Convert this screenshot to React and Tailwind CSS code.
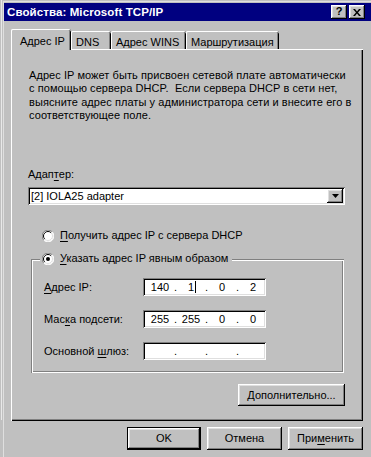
import React from "react";

const raised =
  "shadow-[inset_-1px_-1px_#000,inset_1px_1px_#fff,inset_-2px_-2px_#808080,inset_2px_2px_#dfdfdf]";
const sunken =
  "shadow-[inset_1px_1px_#808080,inset_-1px_-1px_#fff,inset_2px_2px_#000,inset_-2px_-2px_#dfdfdf]";

function Radio({ checked }) {
  return (
    <svg width="12" height="12" viewBox="0 0 12 12" className="shrink-0">
      <circle cx="6" cy="6" r="5.5" fill="#fff" />
      <path d="M10.2 1.8 A5.5 5.5 0 0 0 1.8 10.2" stroke="#808080" strokeWidth="1" fill="none" />
      <path d="M9.2 2.8 A4.2 4.2 0 0 0 2.8 9.2" stroke="#000" strokeWidth="1" fill="none" />
      <path d="M1.8 10.2 A5.5 5.5 0 0 0 10.2 1.8" stroke="#fff" strokeWidth="1" fill="none" />
      <path d="M2.8 9.2 A4.2 4.2 0 0 0 9.2 2.8" stroke="#dfdfdf" strokeWidth="1" fill="none" />
      {checked && <circle cx="6" cy="6" r="2" fill="#000" />}
    </svg>
  );
}

function U({ children }) {
  return <span className="underline underline-offset-[2px] decoration-1">{children}</span>;
}

function IpBox({ values, caret }) {
  return (
    <div className={`h-[18px] w-[123px] bg-white ${sunken} flex items-center pl-[5px]`}>
      {[0, 1, 2, 3].map((i) => (
        <React.Fragment key={i}>
          <div className="w-[24px] text-center leading-[13px] relative">
            {values ? values[i] : ""}
            {caret && i === 1 && (
              <span className="absolute left-[16px] top-[0px] w-[1px] h-[12px] bg-black" />
            )}
          </div>
          {i < 3 && <div className="w-[7px] text-center leading-[13px]">.</div>}
        </React.Fragment>
      ))}
    </div>
  );
}

function Tab({ children, w, selected }) {
  if (selected) {
    return (
      <div
        className={`relative z-10 -mb-[1px] h-[21px] ${w} bg-[#c0c0c0] rounded-tl-[2px] rounded-tr-[2px] shadow-[inset_1px_0_#fff,inset_0_1px_#fff,inset_-1px_0_#000,inset_-2px_0_#808080] flex pl-[9px] pt-[4px]`}
      >
        {children}
      </div>
    );
  }
  return (
    <div
      className={`h-[18px] ${w} rounded-tl-[2px] rounded-tr-[2px] shadow-[inset_1px_0_#fff,inset_0_1px_#fff,inset_-1px_0_#000,inset_-2px_0_#808080] flex pl-[5px] pt-[3px]`}
    >
      {children}
    </div>
  );
}

export default function App() {
  return (
    <div
      className="w-[371px] h-[457px] bg-[#c0c0c0] overflow-hidden flex text-[11px] text-black"
      style={{ fontFamily: '"Liberation Sans", Arial, sans-serif' }}
    >
      <div className="w-[3px] shrink-0 flex">
        <div className="w-[1px]" />
        <div className="w-[1px] h-[420px] bg-[#e8e8e8]" />
      </div>

      <div className="flex-1 pt-[1px]">
        <div className="h-full border-l border-t border-[#dfdfdf]">
          <div className="h-[18px] bg-[#000080] flex items-center pl-[3px] pr-[6px] mt-[1px]">
            <div className="font-bold text-white text-[11.5px] leading-[13px] tracking-[0.1px]">
              Свойства: Microsoft TCP/IP
            </div>
            <div className="ml-auto flex gap-[2px]">
              <div className={`w-[16px] h-[14px] bg-[#c0c0c0] ${raised} flex items-center justify-center font-bold text-[11px] leading-[11px] pb-[1px]`}>
                ?
              </div>
              <div className={`w-[16px] h-[14px] bg-[#c0c0c0] ${raised} flex items-center justify-center`}>
                <svg width="8" height="7" viewBox="0 0 8 7">
                  <path d="M0 0h2l2 2.5L6 0h2L5 3.5 8 7H6L4 4.5 2 7H0l3-3.5z" fill="#000" />
                </svg>
              </div>
            </div>
          </div>

          <div className="pl-[7px] pt-[7px] w-[359px]">
            <div className="flex items-end h-[21px]">
              <Tab w="w-[60px]" selected>Адрес IP</Tab>
              <Tab w="w-[40px]">DNS</Tab>
              <Tab w="w-[75px]">Адрес WINS</Tab>
              <Tab w="w-[93px]">Маршрутизация</Tab>
            </div>

            <div className="h-[372px] w-[352px] shadow-[inset_1px_1px_#fff,inset_-1px_-1px_#000,inset_-2px_-2px_#808080] pl-[17px] pr-[18px] pt-[20px] flex flex-col">
              <div className="pl-[1px] leading-[13.3px] whitespace-pre tracking-[0.07px]">
                {"Адрес IP может быть присвоен сетевой плате автоматически\nс помощью сервера DHCP.  Если сервера DHCP в сети нет,\nвыясните адрес платы у администратора сети и внесите его в\nсоответствующее поле."}
              </div>

              <div className="mt-[46px] leading-[13px]">
                Адап<U>т</U>ер:
              </div>

              <div className={`mt-[6px] h-[18px] w-[317px] bg-white ${sunken} flex items-center pl-[3px] pr-[2px]`}>
                <span className="leading-[13px]">[2] IOLA25 adapter</span>
                <div className={`ml-auto w-[16px] h-[14px] bg-[#c0c0c0] ${raised} flex items-center justify-center`}>
                  <svg width="7" height="4" viewBox="0 0 7 4">
                    <path d="M0 0h7L3.5 4z" fill="#000" />
                  </svg>
                </div>
              </div>

              <div className="mt-[24px] flex items-center h-[13px] pl-[14px] gap-[6px]">
                <Radio />
                <span className="leading-[13px]">
                  <U>П</U>олучить адрес IP с сервера DHCP
                </span>
              </div>

              <div className="mt-[17px] ml-[3px] w-[313px] h-[114px] shadow-[inset_1px_1px_#808080,inset_-1px_-1px_#fff,inset_2px_2px_#fff,inset_-2px_-2px_#808080] flex flex-col">
                <div className="-mt-[7px] ml-[9px] w-fit bg-[#c0c0c0] flex items-center h-[13px] pl-[2px] pr-[4px] gap-[6px]">
                  <Radio checked />
                  <span className="leading-[13px]">
                    <U>У</U>казать адрес IP явным образом
                  </span>
                </div>

                <div className="mt-[13px] flex flex-col gap-[14px] pl-[13px]">
                  <div className="flex items-center">
                    <div className="w-[99px] leading-[13px]">
                      <U>А</U>дрес IP:
                    </div>
                    <IpBox values={["140", "1", "0", "2"]} caret />
                  </div>
                  <div className="flex items-center">
                    <div className="w-[99px] leading-[13px]">
                      Мас<U>к</U>а подсети:
                    </div>
                    <IpBox values={["255", "255", "0", "0"]} />
                  </div>
                  <div className="flex items-center">
                    <div className="w-[99px] leading-[13px]">
                      Основной <U>ш</U>люз:
                    </div>
                    <IpBox />
                  </div>
                </div>
              </div>

              <div className="mt-[11px] flex justify-end">
                <div className={`w-[107px] h-[22px] ${raised} flex items-center justify-center leading-[13px]`}>
                  <span>
                    <U>Д</U>ополнительно...
                  </span>
                </div>
              </div>
            </div>

            <div className="mt-[6px] w-[352px] flex justify-end gap-[6px]">
              <div className="w-[74px] h-[23px] shadow-[inset_0_0_0_1px_#000,inset_-2px_-2px_#000,inset_2px_2px_#fff,inset_-3px_-3px_#808080,inset_3px_3px_#dfdfdf] flex items-center justify-center leading-[13px]">
                OK
              </div>
              <div className={`w-[75px] h-[23px] ${raised} flex items-center justify-center leading-[13px]`}>
                Отмена
              </div>
              <div className={`w-[75px] h-[23px] ${raised} flex items-center justify-center leading-[13px]`}>
                <span>
                  При<U>м</U>енить
                </span>
              </div>
            </div>
          </div>
        </div>
      </div>
    </div>
  );
}
